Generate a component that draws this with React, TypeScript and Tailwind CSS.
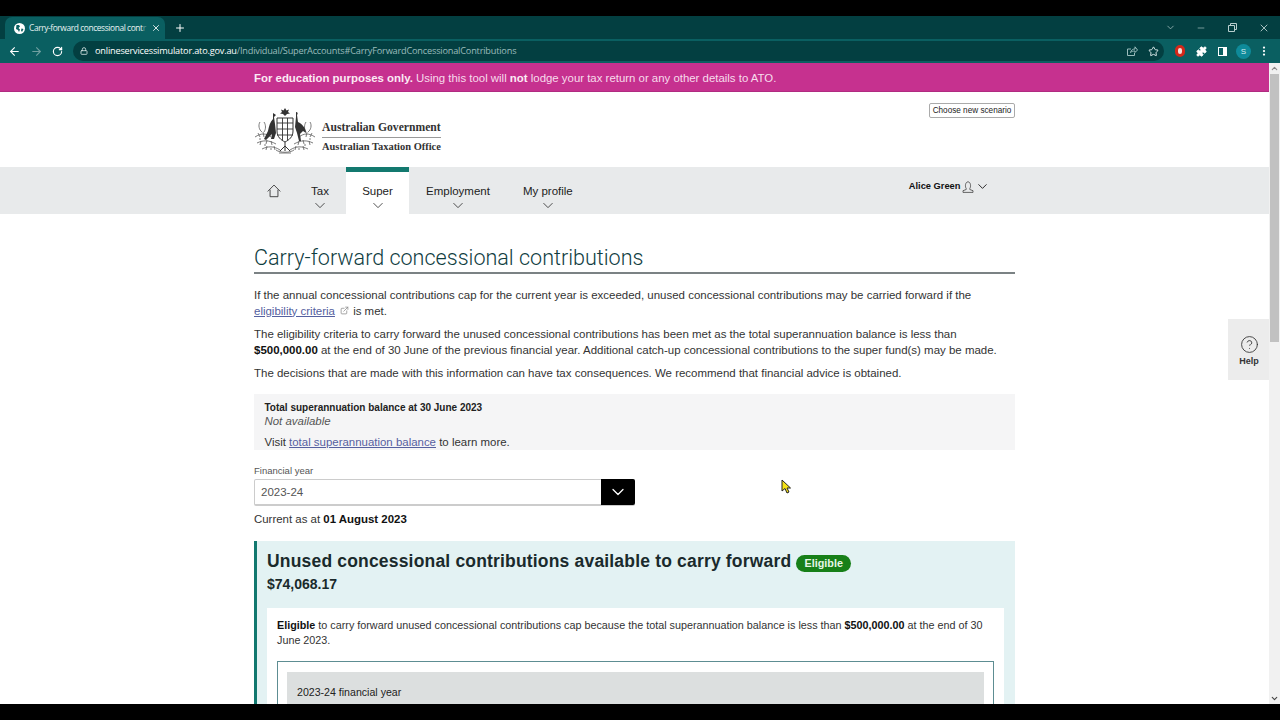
import { ArrowLeft, ArrowRight, RotateCw, Lock, X, Plus, ChevronDown, Minus, Star, Puzzle, ExternalLink, CircleHelp, EllipsisVertical, ChevronUp } from 'lucide-react';

function NavItem({ label, active }: { label: string; active?: boolean }) {
  return (
    <div className={active
      ? 'h-[47px] w-[63px] bg-white border-t-[5px] border-[#13796f] flex flex-col items-center pt-[12px]'
      : 'h-[47px] flex flex-col items-center pt-[17px]'}>
      <span className="text-[11.500px] leading-[14px] text-[#222]">{label}</span>
      <ChevronDown className="w-[20px] h-[20px] -mt-[1px] text-[#222]" strokeWidth={1.100} />
    </div>
  );
}

function Crest() {
  // rough stand-in for the coat of arms
  return (
    <svg width="62" height="46" viewBox="0 0 62 46" className="text-[#333]">
      <g fill="none" stroke="currentColor" strokeWidth="0.8" opacity="0.8">
        <path d="M1 29c6-4 11-4 16 0M3 35c6-3 12-3 19 1M8 41c6-3 12-3 18 1M61 29c-6-4-11-4-16 0M59 35c-6-3-12-3-19 1M54 41c-6-3-12-3-18 1" />
        <path d="M4 25l2 4M9 24l1 5M13 32l-1 4M7 33l-1 4M17 33l1 4M13 38l-1 4M20 38l1 4M58 25l-2 4M53 24l-1 5M49 32l1 4M55 33l1 4M45 33l-1 4M49 38l1 4M42 38l-1 4" />
        <path d="M6 14c-2 3-1 8 2 10M10 14c2 3 2 7 0 10M56 14c2 3 1 8-2 10M52 14c-2 3-2 7 0 10" />
        <path d="M5 31h2M10 37h2M16 41h2M55 31h2M50 37h2M44 41h2M22 42c4 3 14 3 18 0M25 45h12" />
      </g>
      <path d="M31 0l1.500 2.500 2.500-1-1 2.500 2 1.500-3 .5-2 2-2-2-3-.5 2-1.500-1-2.500 2.500 1z" fill="currentColor" />
      <path d="M23 10h16v13c0 6-4 9-8 11-4-2-8-5-8-11z" fill="#fff" stroke="currentColor" strokeWidth="1" />
      <path d="M23 15h16M23 21h16M23 27h16M28.500 10v22M33.500 10v22" stroke="currentColor" strokeWidth="0.9" fill="none" />
      <path d="M31 34v9M31 38l-5 5M31 38l5 5" stroke="currentColor" strokeWidth="1" fill="none" />
      <path d="M19 5l3 2-2 2 1 7 1 9-2 6h-3l1-5-6 6-2-1 4-8c1-5 2-9 5-12z" fill="currentColor" />
      <path d="M42 4c2 0 2 2 1 3l1 7c4 2 8 6 8 11l-3-2-3 3 1 7h-2l-2-8-2-6 1-10z" fill="currentColor" />
    </svg>
  );
}

export default function App() {
  return (
    <div className="w-[1280px] h-[720px] bg-black overflow-hidden flex flex-col font-['Liberation_Sans',Arial,sans-serif]">
      <div className="h-[16px] shrink-0 bg-black" />

      {/* browser chrome */}
      <div className="h-[23px] shrink-0 bg-[#033f41] flex items-end pl-[5px]">
        <div className="w-[160px] h-[22px] bg-[#0a5f61] rounded-t-[7px] flex items-center pl-[9px] text-[#e8f3f3]">
          <svg width="11" height="11" viewBox="0 0 11 11" className="shrink-0">
            <circle cx="5.500" cy="5.500" r="5.500" fill="#fff" />
            <path d="M2.500 2l2.500 0 1 1.500-1.500 1.500 1.500 1.500-1 2.500-1-2-2-1zM7.500 5.500l2 .5-1.500 3-1-1.500z" fill="#0a5f61" />
          </svg>
          <span className="ml-[4px] text-[8.400px] leading-[12px] whitespace-nowrap font-['Open_Sans',sans-serif] tracking-[-0.4px]">Carry-forward concessional cont<span className="opacity-40">r</span></span>
          <X className="w-[10px] h-[10px] ml-[5px] text-white" strokeWidth={2} />
        </div>
        <Plus className="w-[12px] h-[12px] ml-[9px] mb-[5px] text-white" strokeWidth={2} />
        <div className="ml-auto flex items-center h-[23px] text-[#b9cfcf]">
          <ChevronDown className="w-[11px] h-[11px] mr-[20px]" strokeWidth={1.500} />
          <Minus className="w-[10px] h-[10px] mr-[22px]" strokeWidth={1.500} />
          <svg width="9" height="9" viewBox="0 0 9 9" className="mr-[21px]" fill="none" stroke="currentColor"><path d="M.5 2.500h6v6h-6zM2.500 2.500v-2h6v6h-2" /></svg>
          <X className="w-[12px] h-[12px] mr-[10px] text-[#dbe8e8]" strokeWidth={1.500} />
        </div>
      </div>
      <div className="h-[24px] shrink-0 bg-[#0a5f61] flex items-center">
        <ArrowLeft className="w-[13px] h-[13px] ml-[8px] text-white" strokeWidth={2} />
        <ArrowRight className="w-[13px] h-[13px] ml-[9px] text-[#6f9fa0]" strokeWidth={2} />
        <RotateCw className="w-[11px] h-[11px] ml-[9px] text-white" strokeWidth={2.500} />
        <div className="ml-[10px] w-[1091px] h-[20px] rounded-full bg-[#033f41] flex items-center pl-[7px]">
          <Lock className="w-[8px] h-[8px] text-[#d5e3e3]" strokeWidth={2.500} />
          <span className="ml-[7px] text-[9.200px] leading-[12px] whitespace-nowrap font-['Open_Sans',sans-serif] tracking-[-0.2px] text-white">onlineservicessimulator.ato.gov.au<span className="text-[#9bbcbc]">/Individual/SuperAccounts#CarryForwardConcessionalContributions</span></span>
          <svg width="11" height="10" viewBox="0 0 11 10" className="ml-auto text-[#9bbcbc]" fill="none" stroke="currentColor" strokeWidth="1">
            <path d="M4 3H.5v6.500h7V7M3.500 6.500C4 4 6 3 8 3V.8L10.500 4 8 6.500V5C6 5 4.500 5.500 3.500 6.500z" />
          </svg>
          <Star className="w-[11px] h-[11px] ml-[10px] mr-[5px] text-[#e8f3f3]" strokeWidth={2} />
        </div>
        <div className="ml-[11px] w-[10px] h-[12px] rounded-full bg-[#f0e0dc] border-[3px] border-[#d4281a] shrink-0" />
        <Puzzle className="w-[11px] h-[11px] ml-[11px] text-white fill-white" />
        <div className="w-[9px] h-[9px] ml-[11px] border-[1.500px] border-white border-r-[4px]" />
        <div className="w-[15px] h-[15px] ml-[9px] rounded-full bg-[#0e8a99] text-[#d8eef0] text-[8px] leading-[15px] text-center">S</div>
        <EllipsisVertical className="w-[12px] h-[12px] ml-[7px] text-white" strokeWidth={2.500} />
      </div>

      {/* page + scrollbar */}
      <div className="h-[641px] shrink-0 flex bg-white">
        <div className="flex-1 min-w-0 flex flex-col relative overflow-hidden">
          <div className="h-[29px] shrink-0 bg-[#c6318f] flex items-center pl-[254px] pt-[3px] text-[11.420px] text-[#f7dcec] border-b border-[#b02b80]">
            <span><b className="font-bold text-[#fbeaf4]">For education purposes only.</b> Using this tool will <b className="font-bold text-[#fbeaf4]">not</b> lodge your tax return or any other details to ATO.</span>
          </div>

          {/* header */}
          <div className="h-[75px] shrink-0 pl-[254px] flex items-start">
            <div className="mt-[16px]"><Crest /></div>
            <div className="ml-[6px] mt-[29px] w-[119px] font-['Liberation_Serif',serif] font-bold text-[#333] text-[10.450px] leading-[14px]">
              <div className="pb-[2px] border-b border-[#999] whitespace-nowrap text-[11.650px]">Australian Government</div>
              <div className="pt-[2px] whitespace-nowrap">Australian Taxation Office</div>
            </div>
            <button className="ml-[488px] mt-[11px] h-[15px] w-[86px] bg-white border border-[#aaa] rounded-[2px] text-[8.200px] leading-[13px] text-[#222] text-center whitespace-nowrap">Choose new scenario</button>
          </div>

          {/* nav */}
          <div className="h-[47px] shrink-0 bg-[#e8eaeb] pl-[254px] flex items-start">
            <svg width="14" height="14" viewBox="0 0 16 16" className="ml-[13px] mt-[17px] text-[#333]" fill="none" stroke="currentColor" strokeWidth="1">
              <path d="M.8 8.500L8 1.200l7.200 7.300M3.500 6.500v8h9v-8" />
            </svg>
            <div className="ml-[29px]"><NavItem label="Tax" /></div>
            <div className="ml-[16px]"><NavItem label="Super" active /></div>
            <div className="ml-[17px]"><NavItem label="Employment" /></div>
            <div className="ml-[33px]"><NavItem label="My profile" /></div>
            <div className="ml-[336px] mt-[12px] flex items-center text-[9.300px] font-bold text-[#111] whitespace-nowrap">
              Alice Green
              <svg width="12" height="12" viewBox="0 0 12 12" className="ml-[2px] text-[#444]" fill="none" stroke="currentColor" strokeWidth="0.8">
                <path d="M4.200 7.500C3 6 3 1 6 .8 9 1 9 6 7.800 7.500v1l3.200 1.200v1.700H1V9.700l3.200-1.200z" />
              </svg>
              <ChevronDown className="w-[15px] h-[15px] ml-[1px] text-[#111]" strokeWidth={1.400} />
            </div>
          </div>

          {/* content */}
          <div className="ml-[254px] w-[761px] flex flex-col">
            <h1 className="mt-[31px] h-[27px] text-[21.550px] leading-[26px] text-[#0f3d3f] whitespace-nowrap font-['Roboto',sans-serif] font-light">Carry-forward concessional contributions</h1>
            <div className="h-[1.500px] bg-[#7b8284]" />

            <p className="mt-[13px] text-[11.480px] leading-[16px] text-[#333]">
              If the annual concessional contributions cap for the current year is exceeded, unused concessional contributions may be carried forward if the<br />
              <a className="text-[#5560a0] underline">eligibility criteria</a>
              <ExternalLink className="inline w-[9px] h-[9px] ml-[5px] mr-px -mt-[2px] text-[#888]" /> is met.
            </p>
            <p className="mt-[7px] text-[11.480px] leading-[16px] text-[#333] whitespace-nowrap">
              The eligibility criteria to carry forward the unused concessional contributions has been met as the total superannuation balance is less than<br />
              <b className="font-bold text-[#111]">$500,000.00</b> at the end of 30 June of the previous financial year. Additional catch-up concessional contributions to the super fund(s) may be made.
            </p>
            <p className="mt-[7px] text-[11.480px] leading-[16px] text-[#333] whitespace-nowrap">
              The decisions that are made with this information can have tax consequences. We recommend that financial advice is obtained.
            </p>

            <div className="mt-[13px] h-[56px] bg-[#f5f5f6] pl-[10.500px] pt-[7px] text-[11.450px] text-[#333]">
              <div className="text-[10px] leading-[13px] font-bold text-[#222]">Total superannuation balance at 30 June 2023</div>
              <div className="italic leading-[14px] text-[#555]">Not available</div>
              <div className="mt-[7px] leading-[14px]">Visit <a className="text-[#5560a0] underline">total superannuation balance</a> to learn more.</div>
            </div>

            <div className="mt-[15px] text-[9.500px] leading-[12px] text-[#555]">Financial year</div>
            <div className="mt-[2px] w-[381px] h-[27px] flex border border-[#ccc] border-b-[2px] rounded-[2px]">
              <div className="flex-1 pl-[6px] text-[11.500px] leading-[25px] text-[#555]">2023-24</div>
              <div className="w-[34px] -my-px -mr-px bg-black rounded-r-[2px] flex items-center justify-center">
                <ChevronDown className="w-[20px] h-[20px] text-white" strokeWidth={1.500} />
              </div>
            </div>
            <div className="mt-[6px] text-[11.450px] leading-[14px] text-[#333]">Current as at <b className="font-bold text-[#111]">01 August 2023</b></div>

            {/* carry forward panel */}
            <div className="mt-[15px] bg-[#e3f2f3] border-l-[3px] border-[#12786f] h-[170px] pl-[10px] pr-[11px] pt-[10px]">
              <div className="flex items-center h-[20px] whitespace-nowrap">
                <span className="text-[17.500px] leading-[20px] font-bold text-[#1a2a2c] tracking-[0.18px]">Unused concessional contributions available to carry forward</span>
                <span className="ml-[5px] mt-[6px] w-[55px] h-[17px] rounded-full bg-[#178018] text-[#e6f6e6] text-[10.800px] font-bold leading-[17px] text-center">Eligible</span>
              </div>
              <div className="mt-[4px] text-[14px] leading-[18px] font-bold text-[#1a2a2c]">$74,068.17</div>
              <div className="mt-[15px] h-[110px] bg-white px-[10px] pt-[10px]">
                <p className="text-[10.790px] leading-[15px] text-[#333]">
                  <b className="font-bold text-[#111]">Eligible</b> to carry forward unused concessional contributions cap because the total superannuation balance is less than <b className="font-bold text-[#111]">$500,000.00</b> at the end of 30<br />June 2023.
                </p>
                <div className="mt-[13px] h-[60px] border border-[#5d8d92] px-[9px] pt-[10px]">
                  <div className="h-[50px] bg-[#dcdfdf] pl-[10px] pt-[13px] text-[10.600px] leading-[14px] text-[#222]">2023-24 financial year</div>
                </div>
              </div>
            </div>
          </div>

          {/* help tab */}
          <div className="absolute left-[1228px] top-[256px] w-[41px] h-[61px] bg-[#ececec] flex flex-col items-center pt-[16px] pl-px">
            <CircleHelp className="w-[19px] h-[19px] text-[#333]" strokeWidth={1.100} />
            <span className="mt-[2px] text-[9px] leading-[11px] font-bold text-[#333]">Help</span>
          </div>

          {/* mouse pointer */}
          <svg className="absolute left-[781px] top-[416px]" width="10" height="15" viewBox="0 0 10 15">
            <path d="M1 1v11l3-2.500 2 4.500 2-1-2-4h3.500z" fill="#f5e216" stroke="#222" strokeWidth="1" />
          </svg>
        </div>

        {/* scrollbar */}
        <div className="w-[11px] shrink-0 bg-[#f1f1f1] flex flex-col items-center">
          <ChevronUp className="w-[9px] h-[9px] mt-[1px] text-[#888]" strokeWidth={3} />
          <div className="w-[9px] h-[268px] mt-[1px] bg-[#c1c1c1]" />
          <ChevronDown className="w-[9px] h-[9px] mt-auto mb-[1px] text-[#444]" strokeWidth={3} />
        </div>
      </div>
      <div className="flex-1 bg-black" />
    </div>
  );
}
